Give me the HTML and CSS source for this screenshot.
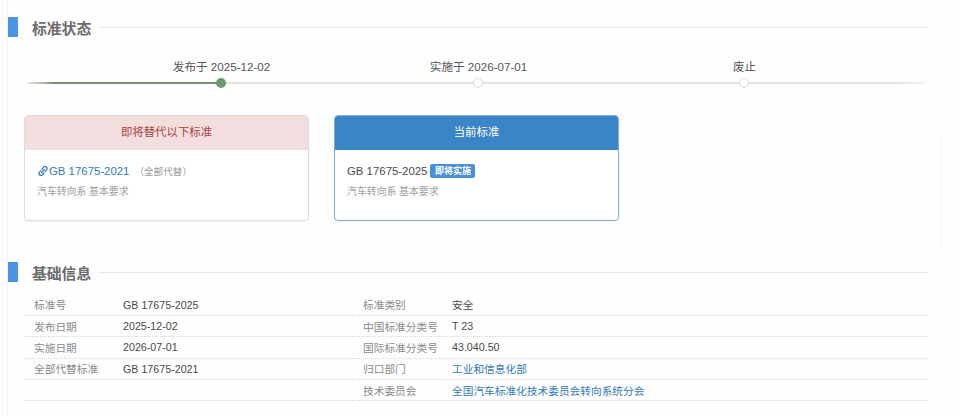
FILE: index.html
```html
<!DOCTYPE html>
<html lang="zh-CN">
<head>
    <meta charset="UTF-8">
    <meta name="viewport" content="width=device-width, initial-scale=1.0">
    <title>GB 17675-2025</title>
    <link rel="stylesheet" href="styles.css">
</head>
<body>
    <div class="page">
        <div class="section-head">
            <span class="section-mark"></span>
            <h2>标准状态</h2>
            <span class="section-line"></span>
        </div>

        <div class="timeline">
            <div class="step step-done">
                <span class="step-label">发布于 2025-12-02</span>
                <span class="step-dot"></span>
            </div>
            <div class="step step-second">
                <span class="step-label">实施于 2026-07-01</span>
                <span class="step-dot"></span>
            </div>
            <div class="step step-third">
                <span class="step-label">废止</span>
                <span class="step-dot"></span>
            </div>
        </div>

        <div class="cards">
            <div class="card card-old">
                <div class="card-title">即将替代以下标准</div>
                <div class="card-body">
                    <div class="card-line">
                        <svg class="link-icon" viewBox="0 0 12 12" fill="none" stroke="#337ab7" stroke-width="1.3" stroke-linecap="round">
                            <path d="M4.9 4.1 L6.6 2.1 A2 2 0 0 1 9.7 4.6 L8.3 6.3"/>
                            <path d="M7.1 7.9 L5.4 9.9 A2 2 0 0 1 2.3 7.4 L3.7 5.7"/>
                            <path d="M4.7 7.5 L7.3 4.5"/>
                        </svg>
                        <a class="std-link" href="#">GB 17675-2021</a>
                        <span class="card-note">（全部代替）</span>
                    </div>
                    <div class="card-sub">汽车转向系 基本要求</div>
                </div>
            </div>
            <div class="card card-current">
                <div class="card-title">当前标准</div>
                <div class="card-body">
                    <div class="card-line">
                        <span class="std-name">GB 17675-2025</span>
                        <span class="badge">即将实施</span>
                    </div>
                    <div class="card-sub">汽车转向系 基本要求</div>
                </div>
            </div>
        </div>

        <div class="section-head section-info">
            <span class="section-mark"></span>
            <h2>基础信息</h2>
            <span class="section-line"></span>
        </div>

        <div class="info">
            <div class="info-cell"><span class="info-key">标准号</span><span>GB 17675-2025</span></div>
            <div class="info-cell"><span class="info-key">标准类别</span><span>安全</span></div>
            <div class="info-cell"><span class="info-key">发布日期</span><span>2025-12-02</span></div>
            <div class="info-cell"><span class="info-key">中国标准分类号</span><span>T 23</span></div>
            <div class="info-cell"><span class="info-key">实施日期</span><span>2026-07-01</span></div>
            <div class="info-cell"><span class="info-key">国际标准分类号</span><span>43.040.50</span></div>
            <div class="info-cell"><span class="info-key">全部代替标准</span><span>GB 17675-2021</span></div>
            <div class="info-cell"><span class="info-key">归口部门</span><a href="#">工业和信息化部</a></div>
            <div class="info-cell"></div>
            <div class="info-cell"><span class="info-key">技术委员会</span><a href="#">全国汽车标准化技术委员会转向系统分会</a></div>
        </div>

        <span class="side-line"></span>
    </div>
</body>
</html>
```

FILE: styles.css
```css
* {
    box-sizing: border-box;
}
html, body {
    height: 100%;
}
body {
    margin: 0;
    background-color: #fefefe;
    color: #4a4a4a;
    font-family: "Liberation Sans", "Noto Sans CJK SC", sans-serif;
    font-size: 10.7px;
    overflow: hidden;
}
a {
    color: #337ab7;
    text-decoration: none;
}
.page {
    position: relative;
    height: 100%;
    margin-left: 7px;
    padding: 17px 32px 0 0;
    border-left: 1px solid #f3f3f3;
}
.side-line {
    position: absolute;
    left: 933px;
    top: 137px;
    width: 1px;
    height: 110px;
    background-color: #f5f5f5;
}

.section-head {
    display: flex;
    align-items: center;
    height: 20px;
}
.section-mark {
    width: 10px;
    height: 20px;
    background-color: #4a94e6;
}
.section-head h2 {
    margin: 0 7px 0 14px;
    color: #6b6b6b;
    font-size: 14.8px;
    font-weight: bold;
}
.section-line {
    flex: 1;
    height: 1px;
    margin-top: 1px;
    background-color: #e9e9e9;
}
.section-info {
    margin-top: 41px;
}

.timeline {
    display: flex;
    position: relative;
    height: 32px;
    margin: 21px 2px 0 19px;
}
.timeline::before {
    content: "";
    position: absolute;
    left: 0;
    right: 0;
    bottom: 6px;
    height: 2px;
    background: linear-gradient(to right, #f0f0f0, #e4e4e4 4%, #e4e4e4 97%, #f4f4f4);
}
.step {
    position: relative;
    display: flex;
    flex-direction: column;
    align-items: center;
    justify-content: space-between;
    width: 110px;
    color: #555;
    font-size: 11.6px;
}
.step-done {
    margin-left: 139px;
}
.step-second {
    margin-left: 147px;
}
.step-third {
    margin-left: 156px;
}
.step-label {
    padding-left: 1px;
    white-space: nowrap;
}
.step-dot {
    position: relative;
    width: 10px;
    height: 10px;
    margin-bottom: 2px;
    border: 1.5px solid #ddd;
    border-radius: 50%;
    background-color: #fff;
}
.step-done .step-dot {
    border: 0;
    background-color: #6c9a6c;
}
/* green part of the line, up to the first dot */
.step-done::before {
    content: "";
    position: absolute;
    left: -139px;
    right: 55px;
    bottom: 6px;
    height: 2px;
    background: linear-gradient(to right, #e8e8e8, #7d9176 14%);
}

.cards {
    display: flex;
    gap: 25px;
    margin: 25px 0 0 16px;
}
.card {
    width: 285px;
    height: 106px;
    border: 1px solid #ddd;
    border-radius: 4px;
    box-shadow: 0 1px 2px rgba(0, 0, 0, 0.06);
    overflow: hidden;
    background-color: #fff;
}
.card-title {
    height: 34px;
    line-height: 33px;
    text-align: center;
    font-size: 11.4px;
}
.card-old .card-title {
    background-color: #f2dede;
    color: #a94442;
}
.card-current {
    border-color: #7fb0d2;
}
.card-current .card-title {
    background-color: #3a85c6;
    color: #fff;
}
.card-body {
    padding: 13px 12px 0;
}
.card-line {
    display: flex;
    align-items: center;
    height: 16px;
    font-size: 11.4px;
}
.link-icon {
    width: 12px;
    height: 12px;
}
.std-link {
    color: #337ab7;
}
.card-note {
    margin-left: 5px;
    color: #999;
    font-size: 9.6px;
}
.std-name {
    color: #4a4a4a;
}
.badge {
    margin-left: 3px;
    padding: 0 4.5px;
    height: 14px;
    line-height: 14px;
    border-radius: 2px;
    background-color: #4a90d9;
    color: #fff;
    font-size: 9px;
    font-weight: bold;
}
.card-sub {
    margin-top: 5px;
    color: #a0a0a0;
    font-size: 9.9px;
}

.info {
    display: grid;
    grid-template-columns: 329px 1fr;
    margin: 12.5px 0 0 16px;
}
.info-cell {
    display: flex;
    align-items: center;
    height: 21.4px;
    padding-left: 10px;
    border-bottom: 1px dotted #d8d8d8;
}
.info-key {
    width: 89px;
    color: #8a8a8a;
}
```
